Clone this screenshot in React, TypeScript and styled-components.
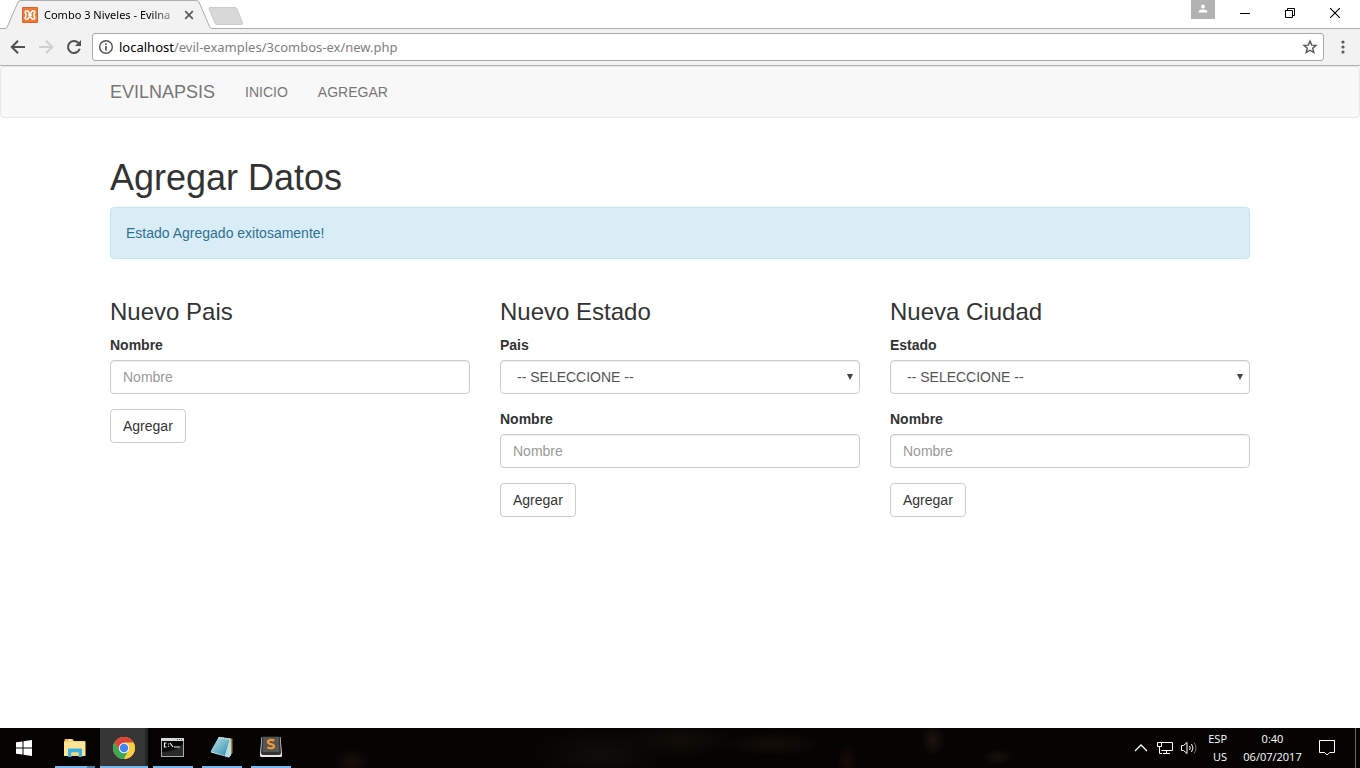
import React, { useId } from "react";
import styled, { createGlobalStyle, css } from "styled-components";

const chromeFont = `"Noto Sans", "Open Sans", sans-serif`;
const trayFont = `"Open Sans", "Noto Sans", sans-serif`;
const bodyFont = `"Liberation Sans", Arial, sans-serif`;

const GlobalStyle = createGlobalStyle`
  *, *::before, *::after { box-sizing: border-box; }
  body {
    margin: 0;
    background: #fff;
    color: #333;
    font: 14px/20px ${bodyFont};
  }
  button, input, select { font: inherit; color: inherit; }
`;

const Screen = styled.div`
  display: flex;
  flex-direction: column;
  min-height: 100vh;
`;

/* Browser window */

const TabStrip = styled.div`
  display: flex;
  align-items: flex-start;
  height: 29px;
  padding-left: 5px;
  border-bottom: 1px solid #adadad;
  font-family: ${chromeFont};
`;

const Tab = styled.div`
  position: relative;
  display: flex;
  align-items: center;
  width: 207px;
  height: 29px;
  padding: 1px 16px 0 17px;
  gap: 6px;
`;

const TabShape = styled.svg`
  position: absolute;
  inset: 0;
`;

const Favicon = styled.svg`
  position: relative;
  flex: none;
`;

const TabTitle = styled.span`
  position: relative;
  flex: 1;
  white-space: nowrap;
  font-size: 11px;
  line-height: 16px;
  color: #000;
  mask-image: linear-gradient(to right, #000 108px, transparent 138px);
`;

const PlainButton = styled.button`
  display: flex;
  align-items: center;
  justify-content: center;
  flex: none;
  padding: 0;
  border: 0;
  background: none;
  cursor: pointer;
`;

const TabClose = styled(PlainButton)`
  position: relative;
  width: 14px;
  height: 16px;
`;

const NewTab = styled(PlainButton)`
  height: 29px;
  padding: 2px 0 0;
  margin-left: -4px;
`;

const WindowControls = styled.div`
  display: flex;
  margin-left: auto;
  padding-right: 3px;
`;

const ProfileButton = styled(PlainButton)`
  width: 24px;
  height: 19px;
  margin-right: 7px;
  padding-bottom: 2px;
  background: #b2b2b2;
`;

const WindowButton = styled(PlainButton)`
  width: 45px;
  height: 26px;
`;

const Toolbar = styled.div`
  display: flex;
  align-items: center;
  height: 37px;
  padding: 0 4px;
  background: #f2f2f2;
  border-bottom: 1px solid #b0b0b0;
`;

const ToolButton = styled(PlainButton)`
  width: 28px;
  height: 28px;
`;

const AddressBar = styled.div`
  display: flex;
  align-items: center;
  flex: 1;
  height: 28px;
  margin: 0 5px 0 4px;
  padding: 0 5px;
  gap: 5px;
  background: #fff;
  border: 1px solid #a9a9a9;
  border-radius: 3px;
`;

const Address = styled.div`
  flex: 1;
  font: 13px/20px ${chromeFont};
  color: #808080;
`;

const Host = styled.span`
  color: #000;
`;

const MenuButton = styled(PlainButton)`
  width: 27px;
  height: 28px;
`;

/* Page */

const Page = styled.div`
  flex: 1;
`;

const Navbar = styled.nav`
  background: #f8f8f8;
  border: 1px solid #e7e7e7;
  border-radius: 4px;
`;

const Container = styled.div`
  max-width: 1170px;
  margin: 0 auto;
  padding: 0 15px;
`;

const NavInner = styled(Container)`
  display: flex;
  min-height: 50px;
`;

const Brand = styled.a`
  padding: 15px 15px 15px 0;
  font-size: 18px;
  color: #777;
  text-decoration: none;
`;

const NavLink = styled.a`
  padding: 15px;
  color: #777;
  text-decoration: none;
`;

const Content = styled(Container)`
  padding-top: 40px;
  padding-bottom: 40px;
`;

const Title = styled.h1`
  margin: 0 0 10px;
  font-size: 36px;
  font-weight: 500;
  line-height: 39px;
`;

const Alert = styled.div`
  margin-bottom: 20px;
  padding: 15px;
  color: #31708f;
  background: #d9edf7;
  border: 1px solid #bce8f1;
  border-radius: 4px;
`;

const Columns = styled.div`
  display: grid;
  grid-template-columns: repeat(3, minmax(0, 1fr));
  gap: 30px;
`;

const FormTitle = styled.h3`
  margin: 20px 0 10px;
  font-size: 24px;
  font-weight: 500;
  line-height: 26px;
`;

const Group = styled.div`
  margin-bottom: 15px;
`;

const Label = styled.label`
  display: block;
  margin-bottom: 5px;
  font-weight: 700;
`;

const control = css`
  display: block;
  width: 100%;
  height: 34px;
  color: #555;
  background: #fff;
  border: 1px solid #ccc;
  border-radius: 4px;
  box-shadow: inset 0 1px 1px rgba(0, 0, 0, 0.075);
`;

const TextInput = styled.input`
  ${control}
  padding: 6px 12px;
  &::placeholder {
    color: #999;
    opacity: 1;
  }
`;

const SelectBox = styled.div`
  position: relative;
`;

const Select = styled.select`
  ${control}
  padding: 6px 16px;
  appearance: none;
`;

const SelectArrow = styled.svg`
  position: absolute;
  top: 14px;
  right: 7px;
  pointer-events: none;
`;

const SubmitButton = styled.button`
  height: 34px;
  padding: 6px 12px;
  background: #fff;
  border: 1px solid #ccc;
  border-radius: 4px;
  cursor: pointer;
`;

/* Taskbar */

const Taskbar = styled.footer`
  display: flex;
  align-items: stretch;
  height: 40px;
  color: #fff;
  font: 11px/18px ${trayFont};
  background:
    radial-gradient(ellipse 18px 14px at 352px 34px, #1a0e0a, transparent),
    radial-gradient(ellipse 70px 28px at 600px 26px, #100c09, transparent),
    radial-gradient(ellipse 60px 18px at 680px 12px, #110c07, transparent),
    radial-gradient(ellipse 50px 12px at 775px 16px, #150d07, transparent),
    radial-gradient(ellipse 10px 18px at 847px 34px, #1a0906, transparent),
    radial-gradient(ellipse 12px 16px at 933px 12px, #20140c, transparent),
    radial-gradient(ellipse 16px 8px at 998px 29px, #18100b, transparent),
    #050403;
`;

const StartButton = styled(PlainButton)`
  width: 48px;
  margin-right: 3px;
`;

const TaskList = styled.div`
  display: flex;
  gap: 1px;
`;

const TaskButton = styled(PlainButton)<{ $active?: boolean; $stacked?: boolean }>`
  width: 48px;
  border-bottom: 2px solid transparent;
  background:
    linear-gradient(
        to right,
        #76b9ed ${(p) => (p.$stacked ? "32px" : "100%")},
        #4f7ea5 ${(p) => (p.$stacked ? "32px" : "100%")}
      )
      center bottom / ${(p) => (p.$active ? "100%" : "40px")} 2px no-repeat border-box,
    ${(p) => (p.$active ? "#363636" : "transparent")};
  ${(p) => p.$active && "box-shadow: inset -4px 0 0 -1px #242424;"}
`;

const Tray = styled.div`
  display: flex;
  align-items: center;
  margin-left: auto;
`;

const TrayButton = styled(PlainButton)`
  width: 24px;
  height: 40px;
`;

const TrayText = styled(PlainButton)<{ $wide?: boolean }>`
  flex-direction: column;
  align-items: ${(p) => (p.$wide ? "center" : "flex-end")};
  width: ${(p) => (p.$wide ? 75 : 34)}px;
  padding: 0 8px;
  white-space: nowrap;
`;

const NotifyButton = styled(PlainButton)`
  width: 34px;
  height: 40px;
`;

const ShowDesktop = styled(PlainButton)`
  width: 5px;
  height: 40px;
  margin-left: 11px;
  border-left: 1px solid #6b6b6b;
`;

function BrowserChrome() {
  return (
    <header>
      <TabStrip>
        <Tab>
          <TabShape width="207" height="29" viewBox="0 0 207 29" aria-hidden="true">
            <path d="M0 28.5 L2 27.5 L13 2 Q14 .5 16 .5 H191 Q193 .5 194 2 L205 27.5 L207 28.5 V29 H0Z" fill="#f2f2f2" />
            <path d="M0 28.5 Q1.500 28.500 2 27.500 L13 2 Q14 .5 16 .5 H191 Q193 .5 194 2 L205 27.500 Q205.500 28.500 207 28.500" fill="none" stroke="#adadad" />
          </TabShape>
          <Favicon width="16" height="16" viewBox="0 0 16 16" aria-hidden="true">
            <rect width="16" height="16" rx="1" fill="#d9642a" />
            <rect x="1" y="1" width="14" height="14" fill="#ee7a35" />
            <path d="M4.900 3.700 C3.200 3.700 2.500 5.600 3.900 6.700 V9.300 C2.500 10.400 3.200 12.300 4.900 12.300 C6.900 12.300 6.300 9.800 8 9.800 S9.100 12.300 11.100 12.300 C12.800 12.300 13.500 10.400 12.100 9.300 V6.700 C13.500 5.600 12.800 3.700 11.100 3.700 C9.100 3.700 9.700 6.200 8 6.200 S6.900 3.700 4.900 3.700Z" fill="none" stroke="#fff" strokeWidth="1.600" />
            <path d="M6.300 8 H9.700" stroke="#fff" strokeWidth="2.200" />
          </Favicon>
          <TabTitle>Combo 3 Niveles - Evilna</TabTitle>
          <TabClose aria-label="Cerrar pestaña">
            <svg width="10" height="10" viewBox="0 0 10 10">
              <path d="M1.200 1.200 L8.800 8.800 M8.800 1.200 L1.200 8.800" stroke="#5a5a5a" strokeWidth="1.700" />
            </svg>
          </TabClose>
        </Tab>
        <NewTab aria-label="Nueva pestaña">
          <svg width="36" height="18" viewBox="0 0 36 18">
            <path d="M2 .5 H27 Q28.500 .5 29 2 L34.500 15.500 Q35 17.500 33.500 17.500 H9 Q7.500 17.500 7 16 L1 2 Q.5 .5 2 .5Z" fill="#d8d8d8" stroke="#cbcbcb" />
          </svg>
        </NewTab>
        <WindowControls>
          <ProfileButton aria-label="Perfil">
            <svg width="10" height="10" viewBox="0 0 10 10">
              <circle cx="5" cy="2.500" r="2" fill="#fff" />
              <path d="M.8 8.500 V7.500 Q1 5.400 5 5.400 T9.200 7.500 V8.500Z" fill="#fff" />
            </svg>
          </ProfileButton>
          <WindowButton aria-label="Minimizar">
            <svg width="10" height="10" viewBox="0 0 10 10">
              <path d="M0 5.500 H10" stroke="#000" />
            </svg>
          </WindowButton>
          <WindowButton aria-label="Restaurar">
            <svg width="10" height="10" viewBox="0 0 10 10">
              <path d="M.5 2.500 H7.500 V9.500 H.5Z M2.500 2.500 V.5 H9.500 V7.500 H7.500" fill="none" stroke="#000" />
            </svg>
          </WindowButton>
          <WindowButton aria-label="Cerrar">
            <svg width="10" height="10" viewBox="0 0 10 10">
              <path d="M0 0 L10 10 M10 0 L0 10" stroke="#000" strokeWidth="1.100" />
            </svg>
          </WindowButton>
        </WindowControls>
      </TabStrip>
      <Toolbar>
        <ToolButton aria-label="Atrás">
          <svg width="16" height="16" viewBox="0 0 16 16">
            <path d="M15 8 H2.500 M8 1.800 L1.800 8 L8 14.200" fill="none" stroke="#505050" strokeWidth="2" />
          </svg>
        </ToolButton>
        <ToolButton aria-label="Adelante">
          <svg width="16" height="16" viewBox="0 0 16 16">
            <path d="M1 8 H13.500 M8 1.800 L14.200 8 L8 14.200" fill="none" stroke="#d0d0d0" strokeWidth="2" />
          </svg>
        </ToolButton>
        <ToolButton aria-label="Recargar">
          <svg width="16" height="16" viewBox="0 0 16 16">
            <path d="M13.700 9.800 A6 6 0 1 1 12.400 3.900" fill="none" stroke="#505050" strokeWidth="2" />
            <path d="M15 1 V7 H9Z" fill="#505050" />
          </svg>
        </ToolButton>
        <AddressBar>
          <svg width="16" height="16" viewBox="0 0 16 16" aria-hidden="true">
            <circle cx="8" cy="8" r="6.300" fill="none" stroke="#505050" strokeWidth="1.400" />
            <path d="M8 7 V11.500 M8 4.400 V6" stroke="#505050" strokeWidth="1.700" />
          </svg>
          <Address>
            <Host>localhost</Host>/evil-examples/3combos-ex/new.php
          </Address>
          <PlainButton aria-label="Marcar esta página">
            <svg width="16" height="16" viewBox="0 0 16 16">
              <path d="M8 2 L9.700 6.100 L14 6.400 L10.700 9.200 L11.800 13.500 L8 11.200 L4.200 13.500 L5.300 9.200 L2 6.400 L6.300 6.100Z" fill="none" stroke="#555" strokeWidth="1.400" />
            </svg>
          </PlainButton>
        </AddressBar>
        <MenuButton aria-label="Menú">
          <svg width="4" height="14" viewBox="0 0 4 14" fill="#5a5a5a">
            <circle cx="2" cy="2" r="1.600" />
            <circle cx="2" cy="7" r="1.600" />
            <circle cx="2" cy="12" r="1.600" />
          </svg>
        </MenuButton>
      </Toolbar>
    </header>
  );
}

function NameForm({ title, parent }: { title: string; parent?: string }) {
  const id = useId();
  return (
    <form onSubmit={(e) => e.preventDefault()}>
      <FormTitle>{title}</FormTitle>
      {parent && (
        <Group>
          <Label htmlFor={`${id}-parent`}>{parent}</Label>
          <SelectBox>
            <Select id={`${id}-parent`}>
              <option>-- SELECCIONE --</option>
            </Select>
            <SelectArrow width="6" height="6" viewBox="0 0 6 6" aria-hidden="true">
              <path d="M0 0 H6 L3 6Z" fill="#444" />
            </SelectArrow>
          </SelectBox>
        </Group>
      )}
      <Group>
        <Label htmlFor={`${id}-name`}>Nombre</Label>
        <TextInput id={`${id}-name`} type="text" placeholder="Nombre" />
      </Group>
      <SubmitButton type="submit">Agregar</SubmitButton>
    </form>
  );
}

function FolderIcon() {
  return (
    <svg width="24" height="24" viewBox="0 0 24 24" aria-hidden="true">
      <path d="M1.500 5 Q1.500 4 2.500 4 H9.500 L11 6 H22 V20 H1.500Z" fill="#f0c04f" />
      <path d="M5.500 5 H8.500" stroke="#fff" strokeWidth="1.200" />
      <path d="M1 6.500 H22.500 V21 H1Z" fill="#fde596" />
      <path d="M5 14.500 Q5 13.500 6 13.500 H18 Q19 13.500 19 14.500 V22 H15.500 V17.500 H8.500 V22 H5Z" fill="#3bb0e4" />
      <path d="M8.500 17.500 H15.500 V21 H8.500Z" fill="#f3d27c" />
    </svg>
  );
}

function ChromeIcon() {
  return (
    <svg width="24" height="24" viewBox="0 0 24 24" aria-hidden="true">
      <circle cx="12" cy="13" r="11" fill="#fccd3f" />
      <path d="M2.470 7.500 A11 11 0 0 1 21.530 7.500 L12 7.800 L7.500 15.600Z" fill="#db4437" />
      <path d="M2.470 7.500 A11 11 0 0 0 12 24 L16.500 15.600 L12 18.200 L7.500 15.600Z" fill="#3aa757" />
      <path d="M12 7.800 H21.700 A11 11 0 0 1 12 24 L16.500 15.600Z" fill="#fccd3f" />
      <circle cx="12" cy="13" r="5.200" fill="#f4f4f4" />
      <circle cx="12" cy="13" r="4.200" fill="#4285f4" />
    </svg>
  );
}

function ConsoleIcon() {
  return (
    <svg width="24" height="24" viewBox="0 0 24 24" aria-hidden="true">
      <rect x="0" y="3" width="23" height="19" fill="#a9acae" />
      <rect x="0" y="3" width="23" height="3" fill="#d5d8da" />
      <rect x="1" y="6" width="21" height="15" fill="#080808" />
      <path d="M1 21 V17 Q14 17 22 9 V21Z" fill="#2a2a2a" />
      <path d="M16 4.500 H17 M18 4.500 H19 M20 4.500 H21" stroke="#555" />
      <path d="M5.500 8 H3.500 V12 H5.500 M7.500 8.500 V9.500 M7.500 10.800 V11.800 M9 8 L12 12 M13 12 H19" fill="none" stroke="#eee" strokeWidth="1.200" />
    </svg>
  );
}

function NotepadIcon() {
  return (
    <svg width="24" height="24" viewBox="0 0 24 24" aria-hidden="true">
      <defs>
        <linearGradient id="note" x1="0" y1="0" x2="1" y2="1">
          <stop offset="0" stopColor="#c4eaf2" />
          <stop offset="1" stopColor="#2689a5" />
        </linearGradient>
      </defs>
      <path d="M20 3 L22.500 4 V18 L20 21Z" fill="#a58042" />
      <path d="M9 2 L20.500 3.500 L21 20 L19 22.500 L1 17.500Z" fill="#e8f3f5" />
      <path d="M8.800 2 L20 4 L15 21 L.5 16.500Z" fill="url(#note)" />
      <path d="M20 4 L21 20 L18.500 22.500 L15 21Z" fill="#b6dce5" />
      <path d="M9 2.500 L20 4.500" stroke="#ddd" strokeWidth="1.500" strokeDasharray="1 1" />
    </svg>
  );
}

function SublimeIcon() {
  return (
    <svg width="24" height="24" viewBox="0 0 24 24" aria-hidden="true">
      <path d="M2.500 2 H21.500 L23 19 V20.500 Q23 22 21.500 22 H2.500 Q1 22 1 20.500 V19Z" fill="#e9e9e9" />
      <path d="M4 1.500 H20 Q21 1.500 21 3 L22 18 Q22 20 20 20 H4 Q2 20 2 18 L3 3 Q3 1.500 4 1.500Z" fill="#333" />
      <path d="M4.200 2 H19.800 L20.300 17 H3.700Z" fill="#555" />
      <path d="M15.300 5.600 C12 4 8.800 5 9 7.300 C9.200 9.500 15 8.700 15 11.300 C15 13.800 11 13.700 8.500 12.300" fill="none" stroke="#f09a35" strokeWidth="2.200" />
    </svg>
  );
}

const tasks = [
  { name: "Explorador de archivos", Icon: FolderIcon, stacked: true },
  { name: "Google Chrome", Icon: ChromeIcon, active: true },
  { name: "Símbolo del sistema", Icon: ConsoleIcon },
  { name: "Bloc de notas", Icon: NotepadIcon },
  { name: "Sublime Text", Icon: SublimeIcon },
];

function DesktopTaskbar() {
  return (
    <Taskbar>
      <StartButton aria-label="Inicio">
        <svg width="16" height="16" viewBox="0 0 16 16" fill="#fff">
          <path d="M0 2.300 L6.500 1.400 V7.500 H0Z M7.500 1.200 L16 0 V7.500 H7.500Z M0 8.500 H6.500 V14.600 L0 13.700Z M7.500 8.500 H16 V16 L7.500 14.800Z" />
        </svg>
      </StartButton>
      <TaskList>
        {tasks.map(({ name, Icon, active, stacked }) => (
          <TaskButton key={name} aria-label={name} $active={active} $stacked={stacked}>
            <Icon />
          </TaskButton>
        ))}
      </TaskList>
      <Tray>
        <TrayButton aria-label="Mostrar iconos ocultos">
          <svg width="14" height="8" viewBox="0 0 14 8">
            <path d="M1 7 L7 1 L13 7" fill="none" stroke="#fff" strokeWidth="1.300" />
          </svg>
        </TrayButton>
        <TrayButton aria-label="Red">
          <svg width="16" height="16" viewBox="0 0 16 16">
            <path d="M4.500 2.500 H15.500 V10.500 H4.500 M9.500 10.500 V13.500 M6 13.500 H13 M.5 2.500 H4.500 V6.500 H.5Z M2.500 6.500 V13.500 H5" fill="none" stroke="#fff" />
          </svg>
        </TrayButton>
        <TrayButton aria-label="Volumen">
          <svg width="16" height="14" viewBox="0 0 16 14" fill="none" stroke="#fff">
            <path d="M.5 4.500 H2.500 L6 1.500 V12.500 L2.500 9.500 H.5Z" />
            <path d="M8.500 5 Q10 7 8.500 9 M10.500 3 Q13.500 7 10.500 11" />
            <path d="M13 1.500 Q17 7 13 12.500" stroke="#777" />
          </svg>
        </TrayButton>
        <TrayText aria-label="Idioma">
          <span>ESP</span>
          <span>US</span>
        </TrayText>
        <TrayText $wide>
          <span>0:40</span>
          <span>06/07/2017</span>
        </TrayText>
        <NotifyButton aria-label="Notificaciones">
          <svg width="16" height="16" viewBox="0 0 16 16">
            <path d="M.5 .5 H15.500 V12.500 H10.500 L8 15 L5.500 12.500 H.5Z" fill="none" stroke="#fff" />
          </svg>
        </NotifyButton>
        <ShowDesktop aria-label="Mostrar escritorio" />
      </Tray>
    </Taskbar>
  );
}

export default function App() {
  return (
    <Screen>
      <GlobalStyle />
      <BrowserChrome />
      <Page>
        <Navbar>
          <NavInner>
            <Brand href="#">EVILNAPSIS</Brand>
            <NavLink href="#inicio">INICIO</NavLink>
            <NavLink href="#agregar">AGREGAR</NavLink>
          </NavInner>
        </Navbar>
        <Content as="main">
          <Title>Agregar Datos</Title>
          <Alert role="alert">Estado Agregado exitosamente!</Alert>
          <Columns>
            <NameForm title="Nuevo Pais" />
            <NameForm title="Nuevo Estado" parent="Pais" />
            <NameForm title="Nueva Ciudad" parent="Estado" />
          </Columns>
        </Content>
      </Page>
      <DesktopTaskbar />
    </Screen>
  );
}
